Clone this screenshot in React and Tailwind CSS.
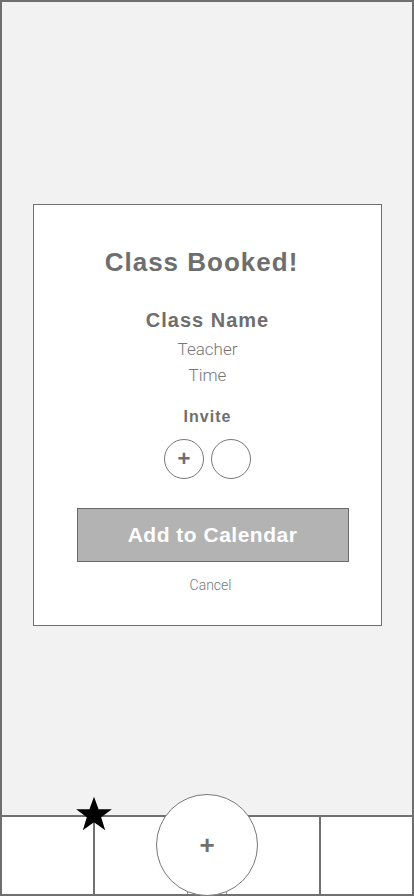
import React from 'react';

const sans = { fontFamily: '"Liberation Sans", Arial, sans-serif' };
const light = { fontFamily: 'Roboto, "Liberation Sans", sans-serif' };

function Star() {
  return (
    <svg width="42" height="42" viewBox="0 0 24 24" className="block">
      <path
        d="M12 1.5l2.6 7.2h7.6l-6.1 4.6 2.3 7.4L12 16.2l-6.4 4.5 2.3-7.4-6.1-4.6h7.6z"
        fill="#000"
      />
    </svg>
  );
}

export default function App() {
  return (
    <div
      className="relative w-[414px] h-[896px] overflow-hidden bg-[#f2f2f2] border-t-[2px] border-x-[2px] border-[#6f6f6f] flex flex-col"
      style={sans}
    >
      <main className="flex-1 pt-[202px] pl-[31px]">
        <div className="w-[349px] h-[422px] bg-white border border-[#707070] flex flex-col items-center text-[#6e6e6e]">
          <h1 className="mt-[40px] mr-[12px] text-[26px] font-bold leading-[34px] tracking-[1px]">Class Booked!</h1>
          <h2 className="mt-[27px] text-[20px] font-bold leading-[28px] tracking-[1px]">Class Name</h2>
          <p className="mt-[2px] text-[17px] font-light leading-[26px] text-[#777]" style={light}>
            Teacher
          </p>
          <p className="text-[17px] font-light leading-[26px] text-[#777]" style={light}>
            Time
          </p>
          <h3 className="mt-[18px] text-[16px] font-bold leading-[22px] tracking-[1px]">Invite</h3>
          <div className="mt-[11px] flex gap-[7px]">
            <button className="w-[40px] h-[40px] rounded-full border border-[#777] flex items-center justify-center text-[22px] font-bold leading-none text-[#6e6e6e]">
              +
            </button>
            <button className="w-[40px] h-[40px] rounded-full border border-[#777]" />
          </div>
          <button className="mt-[29px] ml-[10px] w-[272px] h-[54px] bg-[#b3b3b3] border border-[#6a6a6a] text-white text-[21px] font-bold tracking-[0.5px]">
            Add to Calendar
          </button>
          <button className="mt-[13px] ml-[6px] text-[14px] font-light text-[#777]" style={light}>
            Cancel
          </button>
        </div>
      </main>

      <nav className="relative h-[81px] bg-white border-t-[2px] border-b-[2px] border-[#707070] flex">
        <div className="w-[93px] border-r-[2px] border-[#707070]" />
        <div className="w-[226px] border-r-[2px] border-[#707070]" />
        <div className="flex-1" />
        <div className="absolute left-[185px] bottom-0 w-[40px] h-[8px] border-x border-t border-[#8a8a8a] bg-white" />
        <div className="absolute left-[71px] top-[-23px]">
          <Star />
        </div>
      </nav>
      <button className="absolute left-[154px] top-[792px] w-[102px] h-[102px] rounded-full bg-white border border-[#777] flex items-center justify-center text-[26px] font-bold text-[#707070] leading-none">
        +
      </button>
    </div>
  );
}
